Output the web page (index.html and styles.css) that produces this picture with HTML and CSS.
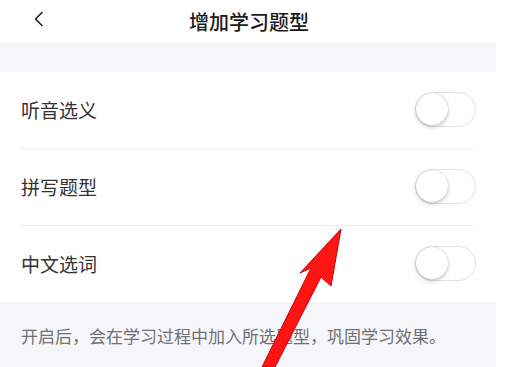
FILE: index.html
```html
<!DOCTYPE html>
<html lang="zh">
<head>
<meta charset="utf-8">
<link rel="stylesheet" href="styles.css">
</head>
<body>
<div class="screen">
  <header class="topbar">
    <svg class="back" width="14" height="18" viewBox="0 0 14 18"><path d="M10 2.5 L3.5 9 L10 15.5" fill="none" stroke="#222" stroke-width="1.6" stroke-linecap="round" stroke-linejoin="round"/></svg>
    <h1 class="title">增加学习题型</h1>
  </header>
  <div class="band"></div>
  <ul class="list">
    <li class="row"><span class="label">听音选义</span><span class="toggle"><span class="knob"></span></span></li>
    <li class="row"><span class="label">拼写题型</span><span class="toggle"><span class="knob"></span></span></li>
    <li class="row"><span class="label">中文选词</span><span class="toggle"><span class="knob"></span></span></li>
  </ul>
  <p class="note">开启后，会在学习过程中加入所选题型，巩固学习效果。</p>
</div>
<svg class="arrow" width="510" height="367" viewBox="0 0 510 367">
  <polygon points="341,229 331,286 321,277 275,367 262,367 311,268 300,273" fill="#ff1414" stroke="#c80000" stroke-width="1"/>
</svg>
</body>
</html>
```
FILE: styles.css
```css
* { box-sizing: border-box; }
html, body { margin: 0; padding: 0; background: #fff; }
body {
  width: 510px;
  height: 367px;
  overflow: hidden;
  position: relative;
  font-family: "Noto Sans CJK SC", "Noto Sans", sans-serif;
}
.screen { width: 496px; }
.topbar {
  height: 42px;
  display: flex;
  align-items: center;
  justify-content: center;
  position: relative;
}
.back { position: absolute; left: 32px; top: 10px; }
.title {
  margin: 0;
  font-size: 20px;
  font-weight: 500;
  color: #1a1a1a;
  padding-left: 2px;
}
.band { height: 30px; background: #f6f6fa; }
.list { list-style: none; margin: 0; padding: 0; }
.row {
  height: 77px;
  margin-left: 20px;
  margin-right: 23px;
  border-bottom: 1px solid #ececec;
  display: flex;
  align-items: center;
  justify-content: space-between;
  padding-bottom: 1px;
}
.row:last-child { border-bottom: none; height: 76px; }
.label { font-size: 19px; color: #333; padding-left: 1px; }
.toggle {
  width: 61px;
  height: 35px;
  border-radius: 18px;
  border: 1.5px solid #e0e0e0;
  background: #fff;
  margin-right: -3px;
  position: relative;
}
.knob {
  position: absolute;
  left: 0;
  top: 0;
  width: 32px;
  height: 32px;
  border-radius: 50%;
  background: #fff;
  box-shadow: 0 2px 4px rgba(0,0,0,0.22), 0 0 1px rgba(0,0,0,0.25);
}
.note {
  margin: 0;
  height: 65px;
  background: #f6f6fa;
  padding: 22px 0 0 21px;
  font-size: 17px;
  line-height: 24px;
  color: #707070;
}
.arrow { position: absolute; left: 0; top: 0; pointer-events: none; }
```
